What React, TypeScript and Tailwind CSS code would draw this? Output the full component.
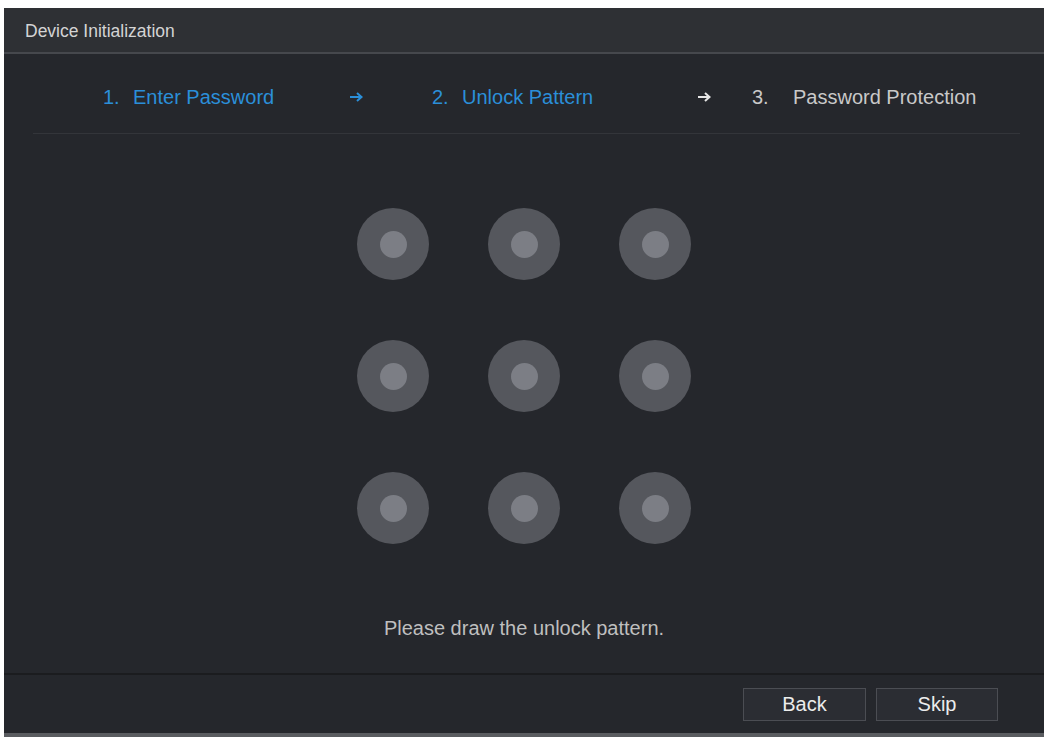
const FONT = { fontFamily: '"Liberation Sans", Arial, sans-serif' };

function Dot() {
  return (
    <div className="flex h-[72px] w-[72px] items-center justify-center rounded-full bg-[#55575d]">
      <div className="h-[27px] w-[27px] rounded-full bg-[#7c7e85]" />
    </div>
  );
}

function Arrow({ color }: { color: string }) {
  return (
    <svg width="13" height="10" viewBox="0 0 13 10" fill="none" style={{ color }}>
      <path d="M0 5h10" stroke="currentColor" strokeWidth="2" />
      <path d="M7 1l4.5 4L7 9" stroke="currentColor" strokeWidth="2" fill="none" />
    </svg>
  );
}

export default function App() {
  return (
    <div className="h-[737px] w-[1048px] bg-white pl-[4px] pr-[4px] pt-[8px]" style={FONT}>
      <div className="flex h-[729px] flex-col bg-[#25272c]">
        <div className="flex h-[46px] items-center border-b-2 border-[#46484d] bg-[#2e3034] pl-[21px] pt-[2px] text-[17.5px] text-[#d4d4d4]">
          Device Initialization
        </div>

        <div className="flex h-[79px] items-center pl-[99px] pt-[7px] text-[20px]">
          <span className="w-[30px] text-[#2b8fd9]">1.</span>
          <span className="w-[217px] text-[#2b8fd9]">Enter Password</span>
          <span className="w-[82px]"><Arrow color="#2b8fd9" /></span>
          <span className="w-[30px] text-[#2b8fd9]">2.</span>
          <span className="w-[236px] text-[#2b8fd9]">Unlock Pattern</span>
          <span className="w-[54px]"><Arrow color="#e6e6e6" /></span>
          <span className="w-[41px] text-[#c9c9c9]">3.</span>
          <span className="text-[#c9c9c9]">Password Protection</span>
        </div>
        <div className="ml-[29px] mr-[24px] h-px bg-[#33353a]" />

        <div className="mt-[74px] grid grid-cols-[72px_72px_72px] justify-center gap-x-[59px] gap-y-[60px]">
          {Array.from({ length: 9 }).map((_, i) => (
            <Dot key={i} />
          ))}
        </div>

        <p className="mt-[73px] h-[22px] text-center text-[20px] leading-[22px] text-[#bfbfbf]">
          Please draw the unlock pattern.
        </p>

        <div className="mt-auto flex h-[60px] items-center justify-end gap-[10px] border-t-2 border-[#1b1c1f] pr-[46px]">
          <button className="h-[33px] w-[123px] border border-[#4b4d53] bg-[#2b2d33] text-[20px] text-[#ececec]">
            Back
          </button>
          <button className="h-[33px] w-[122px] border border-[#4b4d53] bg-[#2b2d33] text-[20px] text-[#ececec]">
            Skip
          </button>
        </div>
        <div className="h-[4px] bg-[#5a5c60]" />
      </div>
    </div>
  );
}
